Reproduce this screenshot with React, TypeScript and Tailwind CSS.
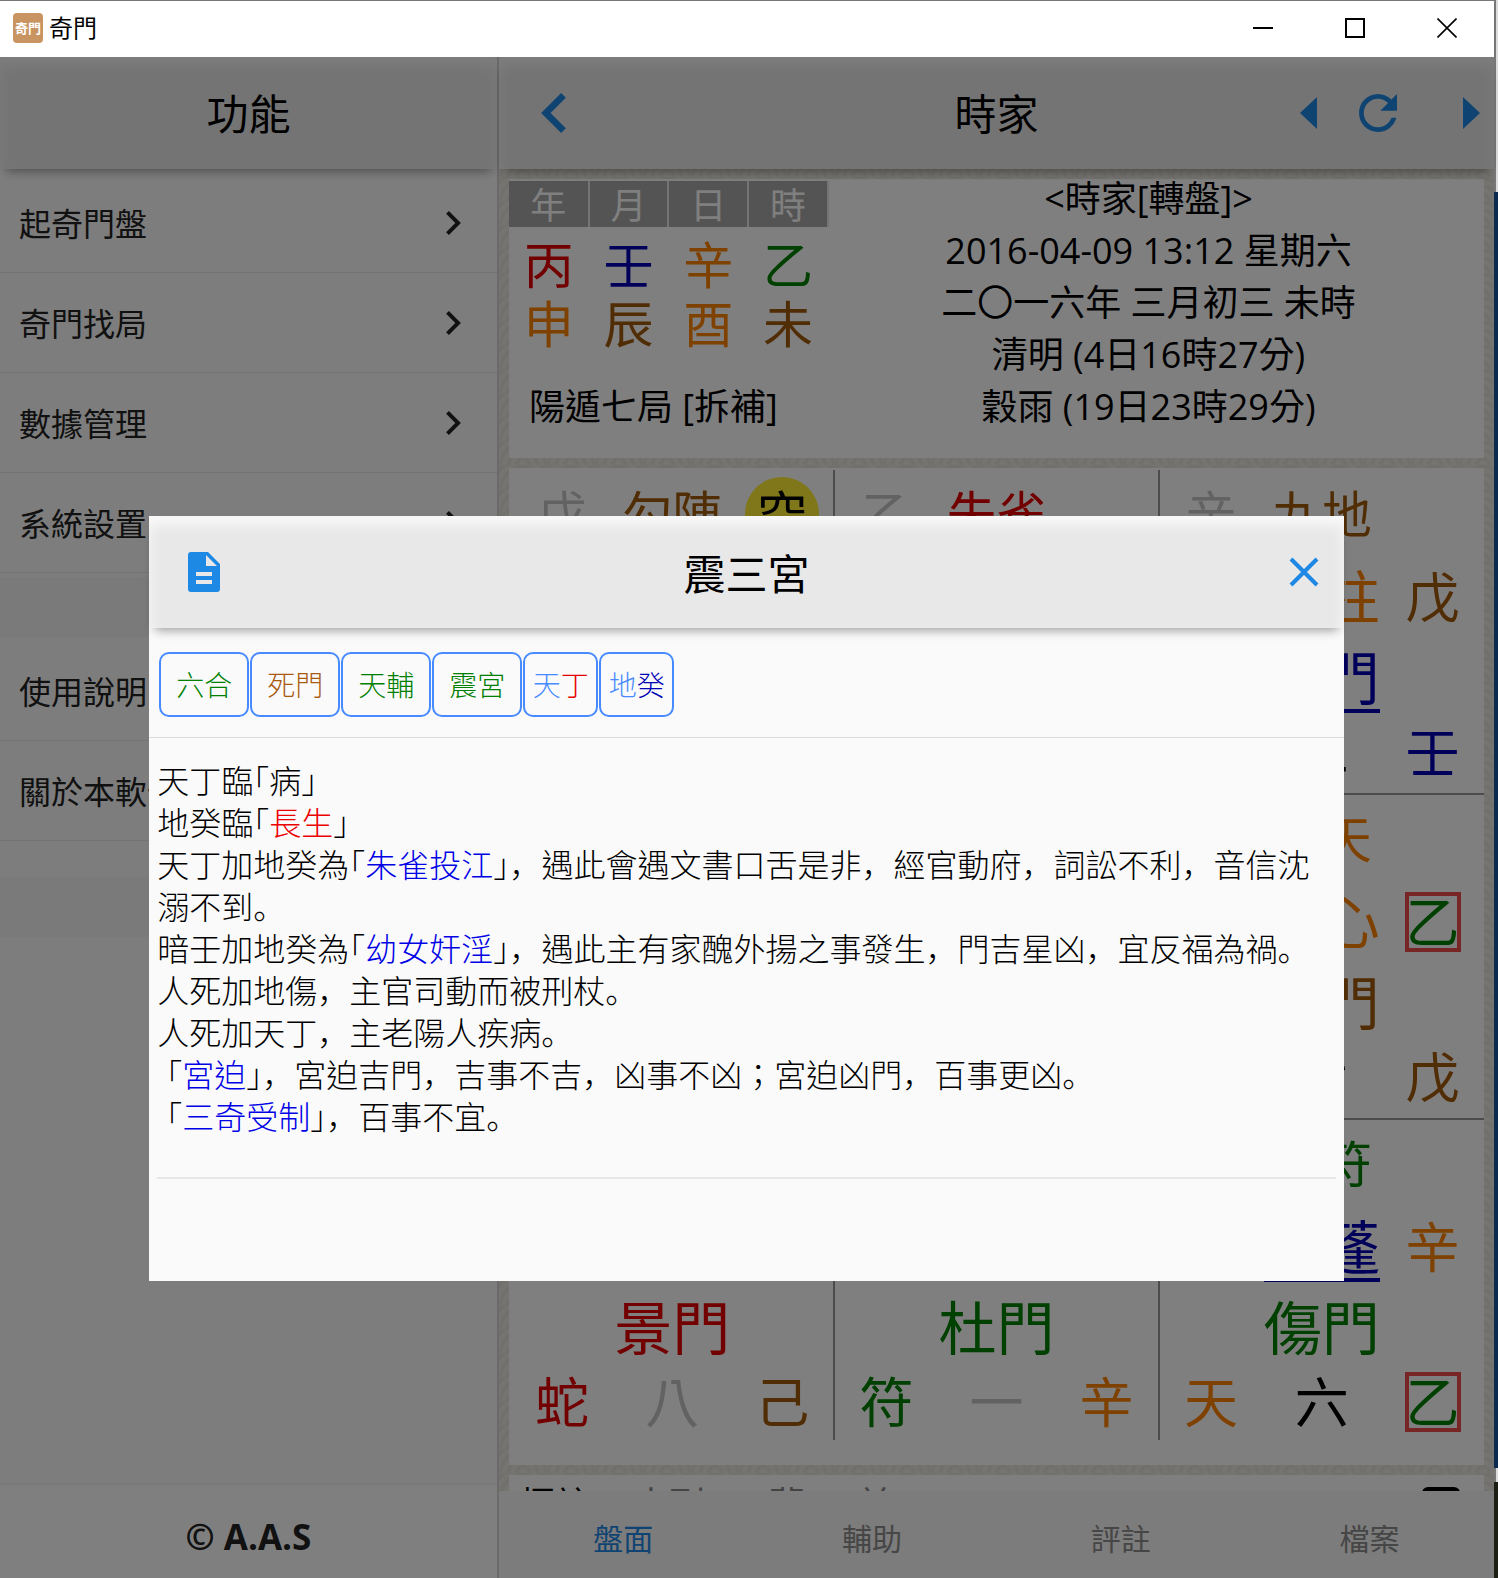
import { useState } from 'react';
import type { ReactNode } from 'react';
import { clsx } from 'clsx';

interface Glyph {
  text: string;
  color: string;
  underline?: boolean;
  boxed?: boolean;
}

interface Palace {
  id: string;
  hidden?: Glyph;
  spirit?: Glyph;
  empty?: boolean;
  star?: Glyph;
  sky?: Glyph;
  door?: Glyph;
  small?: Glyph;
  number?: Glyph;
  earth?: Glyph;
}

const RED = 'text-[#e60000]';
const GREEN = 'text-[#008000]';
const BLUE = 'text-[#0000b4]';
const ORANGE = 'text-[#ff8200]';
const BROWN = 'text-[#a05a0a]';
const GRAY = 'text-[#c4c4c4]';

const menuGroups = [
  ['起奇門盤', '奇門找局', '數據管理', '系統設置'],
  ['使用說明', '關於本軟件'],
];

const pillars = [
  { label: '年', stem: '丙', stemColor: RED, branch: '申', branchColor: ORANGE },
  { label: '月', stem: '壬', stemColor: BLUE, branch: '辰', branchColor: BROWN },
  { label: '日', stem: '辛', stemColor: ORANGE, branch: '酉', branchColor: ORANGE },
  { label: '時', stem: '乙', stemColor: GREEN, branch: '未', branchColor: BROWN },
];

const dateLines = [
  '<時家[轉盤]>',
  '2016-04-09 13:12 星期六',
  '二〇一六年 三月初三 未時',
  '清明 (4日16時27分)',
  '穀雨 (19日23時29分)',
];

const palaces: Palace[] = [
  { id: '4', hidden: { text: '戊', color: GRAY }, spirit: { text: '勾陳', color: BROWN }, empty: true },
  { id: '9', hidden: { text: '乙', color: GRAY }, spirit: { text: '朱雀', color: RED } },
  {
    id: '2',
    hidden: { text: '辛', color: GRAY },
    spirit: { text: '九地', color: BROWN },
    star: { text: '天柱', color: ORANGE },
    sky: { text: '戊', color: BROWN },
    door: { text: '休門', color: BLUE, underline: true },
    number: { text: '二', color: 'text-black' },
    earth: { text: '壬', color: BLUE },
  },
  { id: '3' },
  { id: '5' },
  {
    id: '7',
    spirit: { text: '九天', color: ORANGE },
    star: { text: '天心', color: ORANGE },
    sky: { text: '乙', color: GREEN, boxed: true },
    door: { text: '生門', color: BROWN },
    number: { text: '七', color: 'text-black' },
    earth: { text: '戊', color: BROWN },
  },
  {
    id: '8',
    door: { text: '景門', color: RED },
    small: { text: '蛇', color: RED },
    number: { text: '八', color: GRAY },
    earth: { text: '己', color: BROWN },
  },
  {
    id: '1',
    door: { text: '杜門', color: GREEN },
    small: { text: '符', color: GREEN },
    number: { text: '一', color: GRAY },
    earth: { text: '辛', color: ORANGE },
  },
  {
    id: '6',
    spirit: { text: '值符', color: GREEN },
    star: { text: '天蓬', color: BLUE, underline: true },
    sky: { text: '辛', color: ORANGE },
    door: { text: '傷門', color: GREEN },
    small: { text: '天', color: ORANGE },
    number: { text: '六', color: 'text-black' },
    earth: { text: '乙', color: GREEN, boxed: true },
  },
];

const tabs = ['盤面', '輔助', '評註', '檔案'];

const chips = [
  [{ text: '六合', color: 'text-[#008000]' }],
  [{ text: '死門', color: 'text-[#a85a10]' }],
  [{ text: '天輔', color: 'text-[#008000]' }],
  [{ text: '震宮', color: 'text-[#008000]' }],
  [{ text: '天', color: 'text-[#488aff]' }, { text: '丁', color: 'text-[#e60000]' }],
  [{ text: '地', color: 'text-[#488aff]' }, { text: '癸', color: 'text-[#0000b4]' }],
];

// Brackets are set half-width, commas and stops hug the previous character
const Prose = ({ text }: { text: string }) => (
  <>
    {text.split(/([「」]|[，。])/).map((part, i) => {
      if (part === '「' || part === '」') {
        return <span key={i} className="leading-none [font-feature-settings:'halt']">{part}</span>;
      }
      if (part === '，' || part === '。') {
        return <span key={i} className="font-['Liberation_Sans','Noto_Sans_CJK_SC',sans-serif] leading-none">{part}</span>;
      }
      return part;
    })}
  </>
);

const Term = ({ children, className = 'text-[#0000e6]' }: { children: ReactNode; className?: string }) => (
  <span className={className}>{children}</span>
);

const ChevronRightIcon = () => (
  <svg viewBox="8.59 6 7.41 12" className="h-6 w-[15px]" fill="currentColor">
    <path d="M10 6L8.59 7.41 13.17 12l-4.58 4.59L10 18l6-6z" />
  </svg>
);

const TitleBar = () => (
  <header className="flex h-[57px] shrink-0 items-center border-t border-[#777] bg-white pb-0.5 pl-[13px]">
    <div className="flex size-[30px] items-center justify-center rounded bg-[#c89461] text-[13px] font-bold leading-none text-white">
      奇門
    </div>
    <h1 className="ml-1.5 text-2xl leading-none text-black">奇門</h1>
    <div className="ml-auto flex h-full pr-px text-black">
      <button aria-label="Minimize" className="flex w-[92px] items-center justify-center">
        <svg viewBox="0 0 20 20" className="size-5"><path d="M0 10h20" stroke="currentColor" strokeWidth="2" /></svg>
      </button>
      <button aria-label="Maximize" className="flex w-[92px] items-center justify-center">
        <svg viewBox="0 0 20 20" className="size-5"><path d="M1 1h18v18H1z" fill="none" stroke="currentColor" strokeWidth="2" /></svg>
      </button>
      <button aria-label="Close" className="flex w-[92px] items-center justify-center">
        <svg viewBox="0 0 20 20" className="size-5"><path d="M.5.5l19 19M19.5.5l-19 19" stroke="currentColor" strokeWidth="1.6" /></svg>
      </button>
    </div>
  </header>
);

const Sidebar = () => (
  <aside className="flex w-[33.4%] shrink-0 flex-col border-r-2 border-[#d4d4d4] bg-[#fbfbfb]">
    <div className="relative z-10 flex h-28 shrink-0 items-center justify-center bg-[#e8e8e8] text-[42px] text-black shadow-[inset_0_8px_14px_rgba(255,255,255,0.8),0_8px_10px_-6px_rgba(0,0,0,0.4)]">
      功能
    </div>
    <nav className="flex-1 pt-1">
      {menuGroups.map((group, i) => (
        <div key={group[0]}>
          <ul>
            {group.map((item) => (
              <li key={item} className="border-b border-[#e8e8e8]">
                <button className="flex h-[99px] w-full items-center justify-between pl-[19px] pr-9 text-[32px] text-[#222]">
                  <span className="pt-0.5">{item}</span>
                  <ChevronRightIcon />
                </button>
              </li>
            ))}
          </ul>
          <div className={clsx('mb-1 h-[60px] bg-[#f4f4f4]', i === 0 ? 'mt-1' : 'mt-9')} />
        </div>
      ))}
    </nav>
    <footer className="flex h-[95px] shrink-0 items-center justify-center border-t-2 border-[#f2f2f2] bg-white pt-3 text-[35px] font-bold text-[#222]">
      © A.A.S
    </footer>
  </aside>
);

const MainHeader = () => (
  <div className="relative z-10 grid h-28 shrink-0 grid-cols-[1fr_auto_1fr] items-center bg-[#e8e8e8] shadow-[inset_0_8px_14px_rgba(255,255,255,0.8),0_8px_10px_-6px_rgba(0,0,0,0.4)]">
    <button aria-label="返回" className="ml-[42px] justify-self-start text-[#1e88e5]">
      <svg viewBox="8 6 7.41 12" className="h-10 w-[25px]" fill="currentColor">
        <path d="M15.41 7.41L14 6l-6 6 6 6 1.41-1.41L10.83 12z" />
      </svg>
    </button>
    <h2 className="text-[42px] text-black">時家</h2>
    <div className="mr-3.5 flex items-center justify-self-end text-[#1e88e5]">
      <button aria-label="上一局">
        <svg viewBox="0 0 17 32" className="h-8 w-[17px]" fill="currentColor"><path d="M17 0v32L0 16z" /></svg>
      </button>
      <button aria-label="重新整理" className="ml-[42px] mr-[66px]">
        <svg viewBox="4 4 16 16" className="size-[38px]" fill="currentColor">
          <path d="M17.65 6.35C16.2 4.9 14.21 4 12 4c-4.42 0-7.99 3.58-7.99 8s3.57 8 7.99 8c3.73 0 6.84-2.55 7.73-6h-2.08c-.82 2.33-3.04 4-5.65 4-3.31 0-6-2.69-6-6s2.69-6 6-6c1.66 0 3.14.69 4.22 1.78L13 11h7V4l-2.35 2.35z" />
        </svg>
      </button>
      <button aria-label="下一局">
        <svg viewBox="0 0 17 32" className="h-8 w-[17px]" fill="currentColor"><path d="M0 0v32l17-16z" /></svg>
      </button>
    </div>
  </div>
);

const InfoCard = () => (
  <section className="flex h-[279px] shrink-0 bg-white text-black">
    <div className="w-[320px] shrink-0 pt-0.5">
      <table className="w-full table-fixed border-collapse text-center">
        <thead>
          <tr>
            {pillars.map((p) => (
              <th key={p.label} className="h-[46px] border-r-2 border-[#e8e8e8] bg-[#a8a8a8] p-0 pt-1 text-4xl font-normal leading-none text-white">
                {p.label}
              </th>
            ))}
          </tr>
        </thead>
        <tbody className="text-[50px]">
          <tr>
            {pillars.map((p) => (
              <td key={p.label} className={clsx('h-[68px] p-0 pt-2 leading-none', p.stemColor)}>{p.stem}</td>
            ))}
          </tr>
          <tr>
            {pillars.map((p) => (
              <td key={p.label} className={clsx('h-[54px] p-0 pt-1 leading-none', p.branchColor)}>{p.branch}</td>
            ))}
          </tr>
        </tbody>
      </table>
      <p className="mt-8 whitespace-nowrap pl-5 text-4xl leading-[52px]">陽遁七局 [拆補]</p>
    </div>
    <div className="-mt-1.5 flex-1 pr-4 text-center text-4xl leading-[52px]">
      {dateLines.map((line) => (
        <p key={line} className="whitespace-nowrap">{line}</p>
      ))}
    </div>
  </section>
);

const Cell = ({ glyph, className }: { glyph?: Glyph; className?: string }) => (
  <span
    className={clsx(
      'flex items-center justify-center whitespace-nowrap leading-none',
      glyph?.color,
      glyph?.underline ? 'h-[70px] border-b-4 border-[#0000b4] pt-1' : 'h-[60px]',
      glyph?.boxed && 'outline-4 -outline-offset-4 outline-[#f04a4a]',
      className
    )}
  >
    {glyph?.text}
  </span>
);

const PalaceView = ({ palace }: { palace: Palace }) => (
  <div className="border-b-2 border-r-2 border-[#999] pt-0.5 nth-[3n]:border-r-0 nth-[n+7]:border-b-0">
    <div className="-mx-1 grid h-[84px] grid-cols-3 items-center justify-items-center">
      <Cell glyph={palace.hidden} className="text-[50px]" />
      <Cell glyph={palace.spirit} className="text-[50px]" />
      {palace.empty && (
        <span className="flex size-[74px] items-center justify-center rounded-full bg-[#ffee33] text-[50px] leading-none text-black">空</span>
      )}
    </div>
    <div className="-mx-1 grid h-[82px] grid-cols-3 items-center justify-items-center">
      <span />
      <Cell glyph={palace.star} className="text-[58px]" />
      <Cell glyph={palace.sky} className="w-14 text-[54px]" />
    </div>
    <div className="-mx-1 grid h-20 grid-cols-3 items-center justify-items-center">
      <span />
      <Cell glyph={palace.door} className="text-[58px]" />
    </div>
    <div className="-mx-1 grid h-[68px] grid-cols-3 items-center justify-items-center">
      <Cell glyph={palace.small} className="text-[54px]" />
      <Cell glyph={palace.number} className="text-[54px]" />
      <Cell glyph={palace.earth} className="w-14 text-[54px]" />
    </div>
  </div>
);

const BoardCard = () => (
  <section className="h-[997px] shrink-0 bg-white py-0.5 pl-0.5">
    <div className="grid grid-cols-3 grid-rows-[325px_325px_320px]">
      {palaces.map((p) => <PalaceView key={p.id} palace={p} />)}
    </div>
  </section>
);

const MarkCard = () => (
  <section className="flex h-24 shrink-0 items-start bg-white pl-2.5 pr-6 pt-3 text-4xl leading-none">
    <span className="w-[114px] text-black">標註</span>
    <span className="w-[100px] text-[#888]">人列</span>
    <span className="w-24 text-[#7a93b8]">二<span className="text-[#888]">舊</span></span>
    <span className="ml-7 text-[#888]">並</span>
    <span className="ml-auto h-10 w-[38px] rounded-md border-4 border-black" />
  </section>
);

const TabBar = ({ active, onChange }: { active: string; onChange: (tab: string) => void }) => (
  <nav className="z-10 grid h-[87px] shrink-0 grid-cols-4 bg-[#f8f8f8]">
    {tabs.map((tab) => (
      <button
        key={tab}
        onClick={() => onChange(tab)}
        className={clsx('pt-2 text-[30px]', tab === active ? 'text-[#1e88e5]' : 'text-[#8c8c8c]')}
      >
        {tab}
      </button>
    ))}
  </nav>
);

const PalaceDialog = () => (
  <div role="dialog" aria-label="震三宮" className="h-[765px] w-4/5 bg-[#fafafa] text-black">
    <div className="relative grid h-28 grid-cols-[1fr_auto_1fr] items-center bg-[#e8e8e8] shadow-[inset_0_8px_14px_rgba(255,255,255,0.8),0_8px_10px_-6px_rgba(0,0,0,0.4)]">
      <button aria-label="筆記" className="ml-[39px] justify-self-start text-[#1e88e5]">
        <svg viewBox="4 2 16 20" className="h-10 w-8" fill="currentColor">
          <path d="M14 2H5.4C4.6 2 4 2.6 4 3.4v17.2c0 .8.6 1.4 1.4 1.4h13.2c.8 0 1.4-.6 1.4-1.4V8l-6-6zm2 16H8v-2h8v2zm0-4H8v-2h8v2zm-3-5V3.5L18.5 9H13z" />
        </svg>
      </button>
      <h3 className="pt-0.5 text-[42px]">震三宮</h3>
      <button aria-label="關閉" className="mr-[25px] justify-self-end text-[#1e88e5]">
        <svg viewBox="0 0 30 30" className="size-[30px]">
          <path d="M2 2l26 26M28 2L2 28" stroke="currentColor" strokeWidth="4" />
        </svg>
      </button>
    </div>
    <div className="flex h-[110px] gap-px border-b border-[#dedede] px-2.5 pt-6">
      {chips.map((chip) => (
        <button
          key={chip[0].text}
          className={clsx(
            'h-[65px] rounded-[10px] border-2 border-[#488aff] text-[28px] font-light',
            chip.length > 1 ? 'w-[75px]' : 'w-[90px]'
          )}
        >
          {chip.map((c) => <span key={c.text} className={c.color}>{c.text}</span>)}
        </button>
      ))}
    </div>
    <div className="mx-2 h-[441px] border-b-2 border-[#e8e8e8] pt-[23px] font-['Liberation_Sans','Noto_Sans_CJK_TC',sans-serif] text-[32px] font-light leading-[42px]">
      <p><Prose text="天丁臨「病」" /></p>
      <p><Prose text="地癸臨「" /><Term className="text-[#ee0000]">長生</Term><Prose text="」" /></p>
      <p>
        <Prose text="天丁加地癸為「" /><Term>朱雀投江</Term>
        <Prose text="」，遇此會遇文書口舌是非，經官動府，詞訟不利，音信沈溺不到。" />
      </p>
      <p>
        <Prose text="暗壬加地癸為「" /><Term>幼女奸淫</Term>
        <Prose text="」，遇此主有家醜外揚之事發生，門吉星凶，宜反福為禍。" />
      </p>
      <p><Prose text="人死加地傷，主官司動而被刑杖。" /></p>
      <p><Prose text="人死加天丁，主老陽人疾病。" /></p>
      <p>&nbsp;<Prose text="「" /><Term>宮迫</Term><Prose text="」，宮迫吉門，吉事不吉，凶事不凶；宮迫凶門，百事更凶。" /></p>
      <p>&nbsp;<Prose text="「" /><Term>三奇受制</Term><Prose text="」，百事不宜。" /></p>
    </div>
  </div>
);

export default function App() {
  const [tab, setTab] = useState('盤面');

  return (
    <div className="flex h-screen overflow-hidden bg-[#0a2a50] font-['Open_Sans','Noto_Sans_CJK_TC',sans-serif]">
      <div className="flex min-w-0 flex-1 flex-col">
        <TitleBar />
        <div className="relative flex min-h-0 flex-1">
          <Sidebar />
          <main className="flex min-w-0 flex-1 flex-col bg-[#ebe8e0] bg-[repeating-radial-gradient(circle_at_50%_100%,#ebe8e0_0_4px,#e4e1d8_5px_8px)] bg-size-[48px_24px]">
            <MainHeader />
            <div className="flex min-h-0 flex-1 flex-col gap-2.5 overflow-hidden px-2.5 pt-2.5">
              <InfoCard />
              <BoardCard />
              <MarkCard />
            </div>
            <TabBar active={tab} onChange={setTab} />
          </main>
          <div className="absolute inset-0 z-20 flex items-start justify-center bg-black/50 pr-px pt-[459px]">
            <PalaceDialog />
          </div>
        </div>
      </div>
      {/* Sliver of the desktop behind the window */}
      <div className="flex w-1 shrink-0 flex-col">
        <div className="h-48 border-l-2 border-[#777] bg-[#dcdcdc]" />
        <div className="flex-1" />
        <div className="h-3.5 border-l-2 border-[#777] bg-[#dcdcdc]" />
        <div className="h-24 bg-[#1c2014]" />
      </div>
    </div>
  );
}
